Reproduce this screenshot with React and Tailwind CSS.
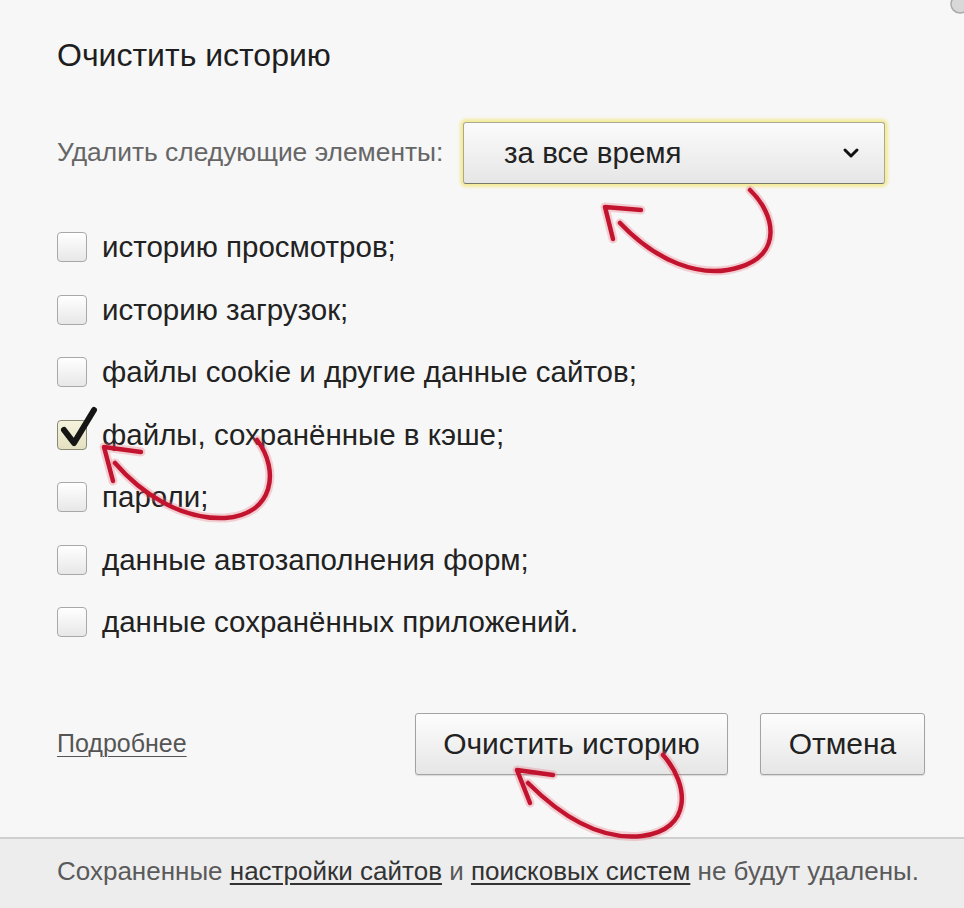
const items = [
  { label: "историю просмотров;", checked: false },
  { label: "историю загрузок;", checked: false },
  { label: "файлы cookie и другие данные сайтов;", checked: false },
  { label: "файлы, сохранённые в кэше;", checked: true },
  { label: "пароли;", checked: false },
  { label: "данные автозаполнения форм;", checked: false },
  { label: "данные сохранённых приложений.", checked: false }
];

const buttonClass =
  "h-[62px] rounded-[3px] border border-[#a3a3a3] bg-gradient-to-b from-[#fdfdfd] to-[#e6e6e6] text-[30px] text-[#222] shadow-[0_1px_1px_rgba(0,0,0,0.12)]";

function CheckBox({ checked }) {
  if (checked) {
    return (
      <span className="relative h-[30px] w-[30px] shrink-0 rounded-[4px] border border-[#8a8a74] bg-gradient-to-b from-[#f4f2dc] to-[#e4e1c2]">
        <svg className="absolute -top-[15px] left-[2px]" width="40" height="46" viewBox="0 0 40 46">
          <path d="M4 24 L14 37 L34 4" fill="none" stroke="#151515" strokeWidth="6" strokeLinecap="round" strokeLinejoin="round" />
        </svg>
      </span>
    );
  }

  return (
    <span className="h-[30px] w-[30px] shrink-0 rounded-[4px] border border-[#a8a8a8] bg-gradient-to-b from-[#ffffff] to-[#e7e7e7] shadow-[inset_0_1px_0_#fff]" />
  );
}

function RedArrows() {
  const curves = [
    "M750 190 C 776 215, 782 254, 740 267 C 700 280, 655 260, 620 223",
    "M257 440 C 280 470, 274 515, 225 518 C 180 520, 140 492, 115 463",
    "M663 755 C 690 785, 692 830, 642 836 C 596 841, 556 811, 528 783"
  ];
  const heads = [
    "M641 210 L605 207 L613 239",
    "M141 452 L104 447 L113 481",
    "M553 775 L517 770 L530 803"
  ];

  return (
    <svg className="pointer-events-none absolute inset-0" width="964" height="908" viewBox="0 0 964 908">
      {curves.concat(heads).map((d) => (
        <path key={`halo-${d}`} d={d} fill="none" stroke="#e8707f" strokeOpacity="0.3" strokeWidth="9" strokeLinecap="round" strokeLinejoin="round" />
      ))}
      {curves.concat(heads).map((d) => (
        <path key={d} d={d} fill="none" stroke="#c3142f" strokeWidth="4.5" strokeLinecap="round" strokeLinejoin="round" />
      ))}
    </svg>
  );
}

export default function App() {
  return (
    <div className="relative h-[908px] w-[964px] overflow-hidden bg-[#f7f7f7] font-['Liberation_Sans',Arial,sans-serif]">
      <div className="flex h-[837px] flex-col pl-[57px] pr-[39px]">
        <div className="flex h-[110px] items-center">
          <h1 className="text-[32px] font-normal leading-none text-[#1e1e1e]">Очистить историю</h1>
        </div>

        <div className="flex h-[86px] items-center">
          <span className="w-[406px] text-[26.4px] text-[#666]">Удалить следующие элементы:</span>
          <div className="flex h-[62px] w-[422px] items-center justify-between rounded-[3px] border border-[#a9a890] border-b-[#77776a] bg-gradient-to-b from-[#fbfbfb] to-[#e6e6e6] pl-[40px] pr-[24px] shadow-[0_0_3px_3px_rgba(243,233,140,0.85)]">
            <span className="text-[29.5px] text-[#222]">за все время</span>
            <svg width="18" height="12" viewBox="0 0 18 12">
              <path d="M3 3 L9 9 L15 3" fill="none" stroke="#111" strokeWidth="3" strokeLinecap="round" strokeLinejoin="round" />
            </svg>
          </div>
        </div>

        <ul className="mt-[20px] flex flex-col">
          {items.map((item) => (
            <li key={item.label} className="flex h-[62.5px] items-center gap-[15px]">
              <CheckBox checked={item.checked} />
              <span className="text-[29.5px] text-[#222]">{item.label}</span>
            </li>
          ))}
        </ul>

        <div className="mt-[59px] flex items-center">
          <a className="text-[25px] text-[#555] underline decoration-1 underline-offset-[4px]">Подробнее</a>
          <div className="ml-auto flex gap-[32px]">
            <button type="button" className={`${buttonClass} w-[313px]`}>Очистить историю</button>
            <button type="button" className={`${buttonClass} w-[165px]`}>Отмена</button>
          </div>
        </div>
      </div>

      <div className="h-[71px] border-t-2 border-[#cfcfcf] bg-[#ededed] pl-[57px] pt-[14px]">
        <p className="whitespace-nowrap text-[26px] leading-[36px] text-[#5a5a5a]">
          Сохраненные <span className="text-[#333] underline underline-offset-[3px]">настройки сайтов</span> и{" "}
          <span className="text-[#333] underline underline-offset-[3px]">поисковых систем</span> не будут удалены.
        </p>
      </div>

      <svg className="absolute right-[-6px] top-[-8px]" width="22" height="28" viewBox="0 0 22 28">
        <circle cx="12" cy="12" r="9" fill="#d8d8d8" stroke="#aaa" strokeWidth="1.5" />
      </svg>

      <RedArrows />
    </div>
  );
}
